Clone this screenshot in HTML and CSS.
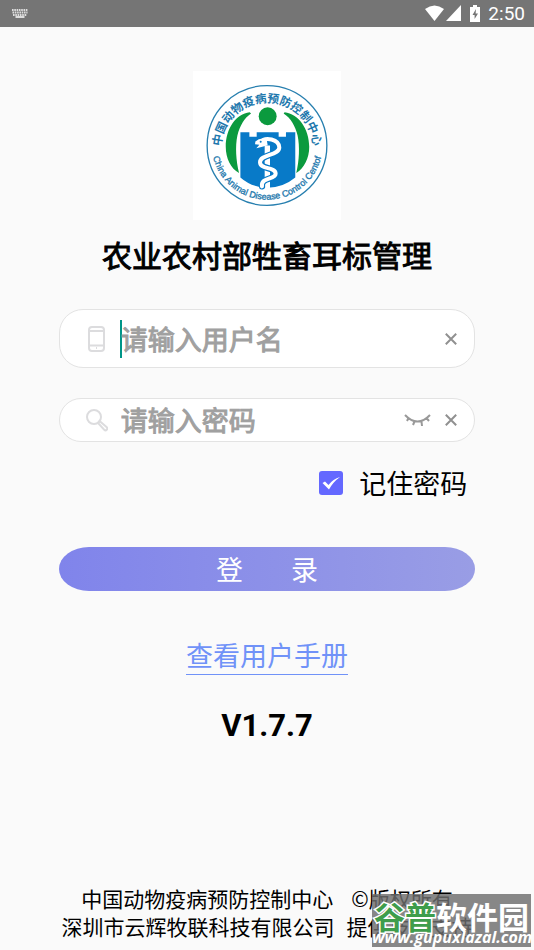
FILE: index.html
```html
<!DOCTYPE html>
<html lang="zh-CN">
<head>
<meta charset="utf-8">
<meta name="viewport" content="width=device-width, initial-scale=1">
<title>农业农村部牲畜耳标管理</title>
<link rel="stylesheet" href="styles.css">
</head>
<body>
<header class="status">
  <svg class="status-keyboard" viewBox="0 0 16 9" aria-hidden="true">
    <path d="M0 1h16M0.5 3.5h15M1 6h14" stroke-dasharray="1.6 .7"/>
    <path d="M3.5 8h9"/>
  </svg>
  <div class="status-right">
    <svg class="status-signal" viewBox="0 0 37 17" aria-hidden="true">
      <path d="M0 4Q9.500-3 19 4L9.500 16Z"/>
      <path d="M36 0V16H21Z"/>
    </svg>
    <svg class="status-battery" viewBox="0 0 10 17" aria-hidden="true">
      <path d="M3 0h4v2h3v15H0V2h3Z"/>
      <path class="bolt" d="M6 4 2.500 10H4.600V14L8 8.500H5.600Z"/>
    </svg>
    <time>2:50</time>
  </div>
</header>
<main class="page">
  <svg class="logo" viewBox="9 8 444 448" role="img" aria-label="中国动物疫病预防控制中心">
    <defs>
      <path id="arc-top" d="M93 241A138 138 0 1 1 369 241"/>
      <path id="arc-bottom" d="M68 262A167 167 0 0 0 395 262"/>
    </defs>
    <rect class="logo-bg" x="9" y="8" width="444" height="448"/>
    <circle class="ring" cx="231" cy="232" r="180"/>
    <path class="green" d="M179 132C138 137 107 181 107 236C107 270 122 302 147 315C138 277 135 235 142 202C149 174 162 150 183 136Z"/>
    <path class="green" d="M284 132C325 137 358 181 358 236C358 270 343 300 319 315C328 277 330 235 323 202C316 174 303 150 281 136Z"/>
    <circle class="green" cx="233" cy="144" r="27"/>
    <path class="blue" d="M151 192H178V206H200V192H266V206H288V192H316V328Q280 358 233 359Q185 358 151 328Z"/>
    <path class="staff" d="M232 232V360"/>
    <path class="snake-edge" d="M211 223C226 203 267 214 268 238C268 263 209 258 210 283C211 305 257 295 257 317C257 335 211 327 216 355"/>
    <path class="snake" d="M211 223C226 203 267 214 268 238C268 263 209 258 210 283C211 305 257 295 257 317C257 335 211 327 216 355"/>
    <path class="snake-head" d="M196 220Q210 207 230 213L233 231L217 236L199 240L208 230L195 228Z"/>
    <circle class="blue" cx="212" cy="221" r="3"/>
    <text class="logo-cn"><textPath href="#arc-top" startOffset="50%">中国动物疫病预防控制中心</textPath></text>
    <text class="logo-en"><textPath href="#arc-bottom" startOffset="50%">China Animal Disease Control Centof</textPath></text>
  </svg>
  <h1 class="title">农业农村部牲畜耳标管理</h1>
  <form class="form">
    <div class="field field-user">
      <svg class="field-icon" viewBox="0 0 24 26" aria-hidden="true">
        <rect x="5" y="1" width="15" height="24" rx="3"/>
        <path d="M5 5h15M5 19.500h15M12 22h1"/>
      </svg>
      <span class="caret"></span>
      <input class="input" type="text" aria-label="用户名" placeholder="请输入用户名">
      <button class="icon-button" type="button" aria-label="清空用户名">
        <svg class="close" viewBox="0 0 12 12" aria-hidden="true"><path d="M.8.8l10.400 10.400M11.200.8.8 11.200"/></svg>
      </button>
    </div>
    <div class="field field-pass">
      <svg class="field-icon" viewBox="0 0 24 26" aria-hidden="true">
        <circle cx="10" cy="10" r="7"/>
        <path d="M14 16l1.500-2 7 6c2 2-.5 4.500-2.500 2.500Z"/>
      </svg>
      <input class="input" type="password" aria-label="密码" placeholder="请输入密码">
      <button class="icon-button" type="button" aria-label="显示密码">
        <svg class="eye" viewBox="0 0 27 13" aria-hidden="true"><path d="M1 1Q13.500 14 26 1M4.500 4 3 7M10.500 7.500 9 11M17.500 7.500 18 12M22.500 4 25 7"/></svg>
      </button>
      <button class="icon-button" type="button" aria-label="清空密码">
        <svg class="close" viewBox="0 0 12 12" aria-hidden="true"><path d="M.8.8l10.400 10.400M11.200.8.8 11.200"/></svg>
      </button>
    </div>
    <label class="remember">
      <span class="check">
        <input class="check-input" type="checkbox" checked>
        <svg class="check-mark" viewBox="0 0 24 24" aria-hidden="true"><path d="M3.500 12 6 10.500 9.500 14Q14 8 21 6Q14 11 10 18.500Z"/></svg>
      </span>
      <span>记住密码</span>
    </label>
    <button class="submit" type="submit"><span>登</span><span>录</span></button>
  </form>
  <a class="manual" href="#">查看用户手册</a>
  <p class="version">V1.7.7</p>
</main>
<footer class="footer">
  <p class="footer-line"><span>中国动物疫病预防控制中心</span><span>©版权所有</span></p>
  <p class="footer-line footer-support"><span>深圳市云辉牧联科技有限公司</span><span>提供技术支持</span></p>
  <div class="watermark">
    <p class="mark-name"><span class="mark-green">谷普</span><span>软件园</span></p>
    <p class="mark-url">www.gupuxlazal.com</p>
  </div>
</footer>
</body>
</html>
```
FILE: styles.css
```css
* {
  box-sizing: border-box;
}

body {
  display: flex;
  flex-direction: column;
  min-height: 100vh;
  margin: 0;
  background: #fafafa;
  color: #000;
  font-family: "Noto Sans CJK SC", sans-serif;
}

h1,
p {
  margin: 0;
}

svg {
  display: block;
  flex: none;
}

.status {
  display: flex;
  align-items: center;
  justify-content: space-between;
  height: 27px;
  padding: 0 9px 0 12px;
  background: #757575;
  color: #fff;
  font: 400 19px/26px Roboto, sans-serif;
}

.status-keyboard {
  width: 16px;
  height: 9px;
  fill: none;
  stroke: #ddd;
  stroke-width: 2;
}

.status-right {
  display: flex;
  align-items: center;
  gap: 8px;
}

.status-signal {
  width: 37px;
  height: 17px;
  fill: #fff;
}

.status-battery {
  width: 10px;
  height: 17px;
  fill: #fff;
}

.bolt {
  fill: #757575;
}

.page {
  display: flex;
  flex-direction: column;
  align-items: center;
  padding: 44px 11% 0;
}

.logo {
  width: 148px;
  height: 149px;
}

.logo-bg {
  fill: #fff;
}

.ring {
  fill: none;
  stroke: #277faf;
  stroke-width: 4;
}

.green {
  fill: #0b9a3e;
}

.blue {
  fill: #087ac8;
}

.staff {
  fill: none;
  stroke: #fff;
  stroke-width: 16;
}

.snake-edge,
.snake {
  fill: none;
  stroke: #087ac8;
  stroke-width: 19;
  stroke-linecap: round;
}

.snake {
  stroke: #fff;
  stroke-width: 12;
}

.snake-head {
  fill: #fff;
}

.logo-cn,
.logo-en {
  fill: #1d78ad;
  font-size: 35px;
  font-weight: 700;
  text-anchor: middle;
}

.logo-en {
  font-family: "Liberation Sans", sans-serif;
  font-size: 27px;
  font-weight: 400;
  stroke: #1d78ad;
}

.title {
  margin-top: 12px;
  font-size: 30px;
  line-height: 44px;
  font-weight: 400;
  -webkit-text-stroke: 1px #000;
  white-space: nowrap;
}

.form {
  display: flex;
  flex-direction: column;
  width: 100%;
  margin-top: 33px;
}

.field {
  display: flex;
  align-items: center;
  height: 44px;
  padding: 0 17px 0 24px;
  border: 1px solid #e3e3e3;
  border-radius: 22px;
  background: #fff;
}

.field-user {
  height: 59px;
  border-radius: 24px;
}

.field-pass {
  margin-top: 30px;
}

.field-icon {
  width: 24px;
  height: 26px;
  fill: none;
  stroke: #dcdcde;
  stroke-width: 2;
}

.caret {
  width: 2px;
  height: 38px;
  margin-left: 12px;
  margin-right: -14px;
  background: #009688;
}

.input {
  flex: 1;
  min-width: 0;
  height: 42px;
  margin-left: 13px;
  padding: 0;
  border: 0;
  outline: 0;
  background: transparent;
  color: #333;
  font: 400 27px/42px "Noto Sans CJK SC", sans-serif;
}

.input::placeholder {
  color: #a0a0a0;
  opacity: 1;
  -webkit-text-stroke: 1px #a0a0a0;
}

.icon-button {
  display: flex;
  padding: 0;
  border: 0;
  background: none;
  cursor: pointer;
}

.close {
  width: 12px;
  height: 12px;
  fill: none;
  stroke: #909090;
  stroke-width: 2;
}

.eye {
  width: 27px;
  height: 13px;
  margin-right: 14px;
  fill: none;
  stroke: #999;
  stroke-width: 2;
}

.remember {
  display: flex;
  align-items: center;
  align-self: flex-end;
  gap: 16px;
  margin-top: 21px;
  padding-right: 8px;
  font-size: 27px;
  line-height: 40px;
}

.check {
  display: grid;
}

.check-input,
.check-mark {
  grid-area: 1 / 1;
  width: 24px;
  height: 24px;
  margin: 0;
}

.check-input {
  appearance: none;
  border-radius: 3px;
  background: #bbb;
}

.check-input:checked {
  background: #6468ff;
}

.check-mark {
  fill: #fff;
  pointer-events: none;
}

.submit {
  display: flex;
  align-items: center;
  justify-content: center;
  gap: 48px;
  height: 44px;
  margin-top: 44px;
  padding: 0;
  border: 0;
  border-radius: 30px / 22px;
  background: linear-gradient(90deg, #8084eb, #999de5);
  color: #fff;
  font: 400 27px/40px "Noto Sans CJK SC", sans-serif;
}

.manual {
  margin-top: 44px;
  border-bottom: 1px solid #7092f8;
  color: #7092f8;
  font-size: 27px;
  line-height: 39px;
  text-decoration: none;
}

.version {
  margin-top: 31px;
  font: 700 31px/40px Roboto, sans-serif;
}

.footer {
  position: relative;
  margin-top: auto;
  padding-bottom: 10px;
  font-size: 21px;
  line-height: 28px;
}

.footer-line {
  display: flex;
  justify-content: center;
  gap: 18px;
  white-space: nowrap;
}

.footer-support {
  gap: 12px;
}

.watermark {
  position: absolute;
  right: 3px;
  bottom: 3px;
  width: 159px;
  height: 53px;
  background: rgba(110, 110, 110, 0.82);
  color: #fff;
  font-weight: 700;
  white-space: nowrap;
}

.mark-name {
  display: flex;
  justify-content: center;
  height: 35px;
  padding-top: 4px;
  font-size: 31px;
  line-height: 35px;
}

.mark-green {
  color: #3f9d4c;
  -webkit-text-stroke: 3px #fff;
  paint-order: stroke fill;
}

.mark-url {
  font: italic 700 16px/16px "Open Sans", sans-serif;
  text-align: center;
}
```
